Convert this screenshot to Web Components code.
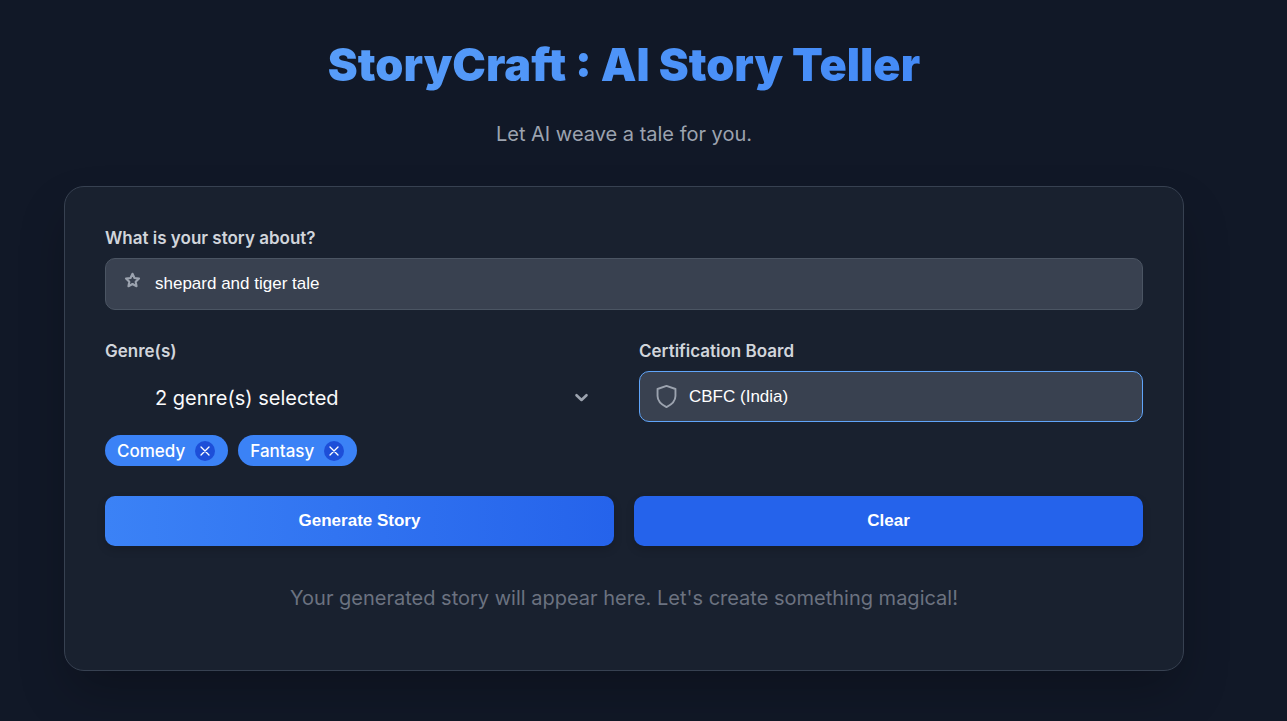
<!DOCTYPE html>
<html lang="en">
<head>
<meta charset="utf-8">
<title>StoryCraft : AI Story Teller</title>
<style>
  html { background: #111827; }
  body { margin: 0; font-family: Inter, "Liberation Sans", sans-serif; color: #f9fafb; }
</style>
</head>
<body>
<story-page>
  <story-header slot="header" heading="StoryCraft : AI Story Teller">Let AI weave a tale for you.</story-header>
  <story-card>
    <story-topic></story-topic>
    <story-columns>
      <genre-picker></genre-picker>
      <board-picker></board-picker>
    </story-columns>
    <story-actions></story-actions>
    <story-output>Your generated story will appear here. Let's create something magical!</story-output>
  </story-card>
</story-page>
<script>
const fieldStyles = `
  *, *::before { box-sizing: border-box; }
  label { display: block; font-size: 17px; font-weight: 600; line-height: 23px; margin-bottom: 8px; color: #d1d5db; }
  .box { position: relative; }
  .box svg { position: absolute; pointer-events: none; }
  input, select { display: block; width: 100%; margin: 0; padding: 0 20px 0 49px; border: 1px solid #4b5563;
    border-radius: 10px; background: #394150; color: #fff; font: 17px "Liberation Sans", Arial, sans-serif;
    outline: none; appearance: none; }
`;

function define(name, html, setup) {
  const template = document.createElement('template');
  template.innerHTML = html;
  customElements.define(name, class extends HTMLElement {
    constructor() {
      super();
      this.attachShadow({ mode: 'open' }).append(template.content.cloneNode(true));
    }
    connectedCallback() { if (setup) setup(this, this.shadowRoot); }
  });
}

define('story-page', `
  <style>
    :host { display: block; padding: 35px 103px 50px 64px; }
    main { margin-top: 40px; }
  </style>
  <slot name="header"></slot>
  <main><slot></slot></main>`);

define('story-header', `
  <style>
    :host { display: block; text-align: center; }
    h1 { margin: 0 0 27px; font-size: 45px; font-weight: 900; line-height: 60px;
      background: linear-gradient(90deg, #60a5fa, #3b82f6); background-clip: text; -webkit-background-clip: text; color: transparent; }
    p { margin: 0; font-size: 20px; line-height: 24px; color: #9ca3af; }
  </style>
  <h1></h1><p><slot></slot></p>`,
  (host, root) => { root.querySelector('h1').textContent = host.getAttribute('heading'); });

define('story-card', `
  <style>
    :host { display: flex; flex-direction: column; gap: 30px; padding: 40px; border: 1px solid #374151;
      border-radius: 20px; background: #19212f; box-shadow: 0 25px 50px -6px rgba(0, 0, 0, .25); }
  </style>
  <slot></slot>`);

define('story-columns', `
  <style>:host { display: grid; grid-template-columns: 1fr 1fr; gap: 30px; align-items: start; }</style>
  <slot></slot>`);

define('story-topic', `
  <style>${fieldStyles}
    :host { display: block; }
    input { height: 52px; }
    svg { left: 19px; top: 14px; width: 17px; height: 17px; }
  </style>
  <label for="topic">What is your story about?</label>
  <div class="box">
    <input id="topic" type="text" value="shepard and tiger tale">
    <svg viewBox="0 0 24 24" fill="none" stroke="#9ca3af" stroke-width="3" stroke-linejoin="round"><path d="M12 2.500l2.800 6 6.400.800-4.700 4.400 1.200 6.400L12 17l-5.700 3.100 1.200-6.400-4.700-4.400 6.400-.800z"/></svg>
  </div>`);

define('genre-picker', `
  <style>${fieldStyles}
    :host { display: block; }
    .trigger { display: flex; width: 100%; height: 54px; align-items: center; justify-content: space-between;
      margin: 0 0 10px; padding: 0 20px 0 50px; border: 0; background: none; color: #f9fafb;
      font: 20px/24px Inter, sans-serif; text-align: left; }
    .chips { display: flex; flex-wrap: wrap; gap: 10px; }
  </style>
  <label for="genres">Genre(s)</label>
  <button class="trigger" id="genres" type="button" aria-haspopup="listbox">
    <span>2 genre(s) selected</span>
    <svg width="16" height="16" viewBox="0 0 16 16" fill="none" stroke="#9ca3af" stroke-width="2.600" stroke-linecap="round" stroke-linejoin="round"><path d="M3.500 5.200L8.500 10l5-4.800"/></svg>
  </button>
  <div class="chips"><genre-chip>Comedy</genre-chip><genre-chip>Fantasy</genre-chip></div>`);

define('genre-chip', `
  <style>
    :host { display: inline-flex; align-items: center; gap: 10px; height: 31px; padding: 0 13px 0 12px; box-sizing: border-box;
      border-radius: 16px; background: #3b82f6; color: #fff; font-size: 17px; font-weight: 500; line-height: 24px; }
    button { display: grid; place-items: center; width: 20px; height: 20px; padding: 0; border: 0; border-radius: 50%; background: #1d4ed8; }
  </style>
  <slot></slot>
  <button type="button" aria-label="Remove"><svg width="10" height="10" viewBox="0 0 10 10" fill="none" stroke="#fff" stroke-width="1.3" stroke-linecap="round"><path d="M1 1l8 8M9 1L1 9"/></svg></button>`,
  (host, root) => root.querySelector('button').addEventListener('click', () => host.remove()));

define('board-picker', `
  <style>${fieldStyles}
    :host { display: block; }
    select { height: 51px; border-color: #60a5fa; }
    svg { left: 15px; top: 13px; width: 25px; height: 25px; }
  </style>
  <label for="board">Certification Board</label>
  <div class="box">
    <select id="board"><option>CBFC (India)</option></select>
    <svg viewBox="0 0 24 24" fill="none" stroke="#9ca3af" stroke-width="1.8" stroke-linejoin="round"><path d="M12 1.800L3.400 4.800V11.500c0 5 3.600 8.200 8.600 10.700 5-2.500 8.600-5.700 8.600-10.700V4.800z"/></svg>
  </div>`);

define('story-actions', `
  <style>
    :host { display: grid; grid-template-columns: 1fr 1fr; gap: 20px; }
    button { height: 50px; padding: 0; border: 0; border-radius: 10px; background: #2563eb; color: #fff;
      font: bold 17px "Liberation Sans", Arial, sans-serif; box-shadow: 0 4px 8px rgba(0, 0, 0, .15); }
    .primary { background: linear-gradient(90deg, #3b82f6, #2563eb); }
  </style>
  <button class="primary" type="button">Generate Story</button>
  <button type="button">Clear</button>`);

define('story-output', `
  <style>
    :host { display: block; padding: 9px 0 19px; text-align: center; color: #6b7280; font-size: 20px; line-height: 26px; }
    p { margin: 0; }
  </style>
  <p><slot></slot></p>`);
</script>
</body>
</html>
